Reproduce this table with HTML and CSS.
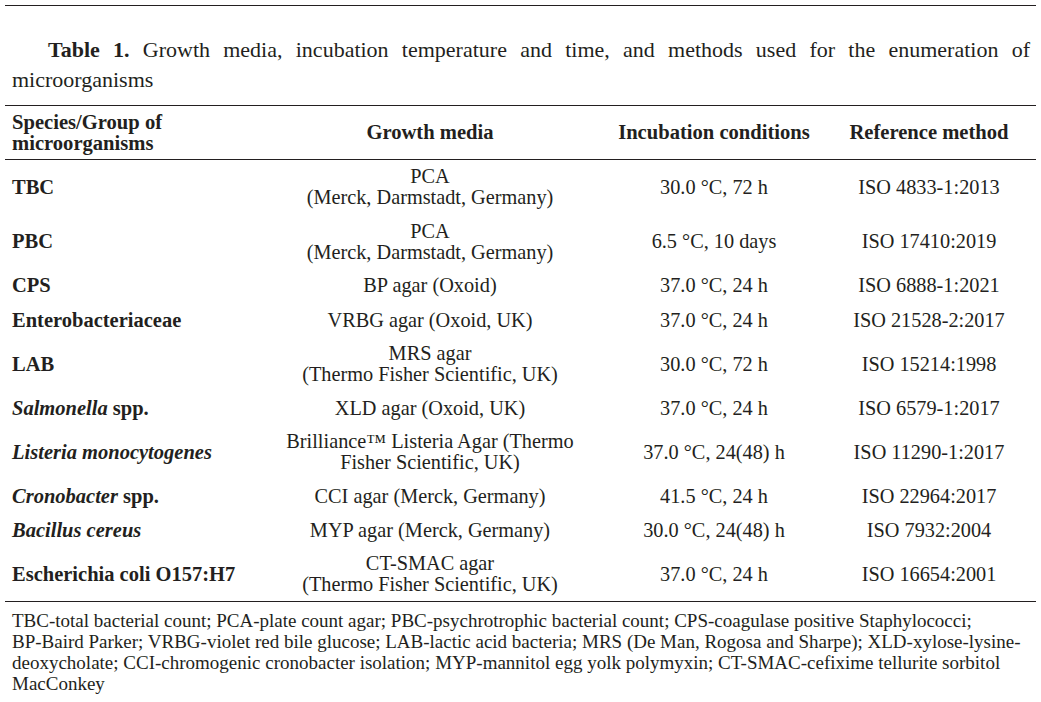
FILE: index.html
```html
<!DOCTYPE html>
<html lang="en">
<head>
<meta charset="utf-8">
<title>Table 1</title>
<link rel="stylesheet" href="styles.css">
</head>
<body>
<div class="page">
  <div class="caption">
    <div class="cap-l1"><b>Table 1.</b> Growth media, incubation temperature and time, and methods used for the enumeration of</div>
    <div class="cap-l2">microorganisms</div>
  </div>
  <table class="data">
    <thead>
      <tr>
        <th class="c1">Species/Group of<br>microorganisms</th>
        <th class="c2">Growth media</th>
        <th class="c3">Incubation conditions</th>
        <th class="c4">Reference method</th>
      </tr>
    </thead>
    <tbody>
      <tr>
        <td class="c1">TBC</td>
        <td class="c2">PCA<br>(Merck, Darmstadt, Germany)</td>
        <td class="c3">30.0 °C, 72 h</td>
        <td class="c4">ISO 4833-1:2013</td>
      </tr>
      <tr>
        <td class="c1">PBC</td>
        <td class="c2">PCA<br>(Merck, Darmstadt, Germany)</td>
        <td class="c3">6.5 °C, 10 days</td>
        <td class="c4">ISO 17410:2019</td>
      </tr>
      <tr>
        <td class="c1">CPS</td>
        <td class="c2">BP agar (Oxoid)</td>
        <td class="c3">37.0 °C, 24 h</td>
        <td class="c4">ISO 6888-1:2021</td>
      </tr>
      <tr class="r-entero">
        <td class="c1">Enterobacteriaceae</td>
        <td class="c2">VRBG agar (Oxoid, UK)</td>
        <td class="c3">37.0 °C, 24 h</td>
        <td class="c4">ISO 21528-2:2017</td>
      </tr>
      <tr>
        <td class="c1">LAB</td>
        <td class="c2">MRS agar<br>(Thermo Fisher Scientific, UK)</td>
        <td class="c3">30.0 °C, 72 h</td>
        <td class="c4">ISO 15214:1998</td>
      </tr>
      <tr>
        <td class="c1"><i>Salmonella</i> spp.</td>
        <td class="c2">XLD agar (Oxoid, UK)</td>
        <td class="c3">37.0 °C, 24 h</td>
        <td class="c4">ISO 6579-1:2017</td>
      </tr>
      <tr>
        <td class="c1"><i>Listeria monocytogenes</i></td>
        <td class="c2">Brilliance™ Listeria Agar (Thermo<br>Fisher Scientific, UK)</td>
        <td class="c3">37.0 °C, 24(48) h</td>
        <td class="c4">ISO 11290-1:2017</td>
      </tr>
      <tr>
        <td class="c1"><i>Cronobacter</i> spp.</td>
        <td class="c2">CCI agar (Merck, Germany)</td>
        <td class="c3">41.5 °C, 24 h</td>
        <td class="c4">ISO 22964:2017</td>
      </tr>
      <tr>
        <td class="c1"><i>Bacillus cereus</i></td>
        <td class="c2">MYP agar (Merck, Germany)</td>
        <td class="c3">30.0 °C, 24(48) h</td>
        <td class="c4">ISO 7932:2004</td>
      </tr>
      <tr>
        <td class="c1">Escherichia coli O157:H7</td>
        <td class="c2">CT-SMAC agar<br>(Thermo Fisher Scientific, UK)</td>
        <td class="c3">37.0 °C, 24 h</td>
        <td class="c4">ISO 16654:2001</td>
      </tr>
    </tbody>
  </table>
  <p class="footnote">TBC-total bacterial count; PCA-plate count agar; PBC-psychrotrophic bacterial count; CPS-coagulase positive Staphylococci;<br>BP-Baird Parker; VRBG-violet red bile glucose; LAB-lactic acid bacteria; MRS (De Man, Rogosa and Sharpe); XLD-xylose-lysine-<br>deoxycholate; CCI-chromogenic cronobacter isolation; MYP-mannitol egg yolk polymyxin; CT-SMAC-cefixime tellurite sorbitol<br>MacConkey</p>
</div>
</body>
</html>
```
FILE: styles.css
```css
html, body {
  margin: 0;
  padding: 0;
  background: #ffffff;
}

.page {
  width: 1031px;
  margin: 5px 0 0 5px;
  border-top: 1px solid #231f20;
  color: #231f20;
  font-family: "Liberation Serif", "Times New Roman", serif;
}

.caption {
  margin: 29px 6px 10px 7px;
  font-size: 22px;
  line-height: 30px;
}

.cap-l1 {
  text-align: justify;
  text-align-last: justify;
  text-indent: 36px;
}

.cap-l2 {
  text-align: left;
}

.data {
  width: 1031px;
  border-collapse: collapse;
  table-layout: fixed;
  font-size: 20.3px;
  line-height: 21px;
}

.data thead tr {
  border-top: 1px solid #231f20;
  border-bottom: 1px solid #231f20;
}

.data tbody tr:last-child {
  border-bottom: 1px solid #231f20;
}

.data th {
  font-weight: bold;
  font-size: 20.6px;
  padding: 5.5px 0;
  vertical-align: middle;
}

.data td {
  padding: 6.3px 0;
  vertical-align: middle;
}

.data .r-entero td {
  padding-top: 7.3px;
  padding-bottom: 5.8px;
}

.data .c1 {
  width: 249px;
  text-align: left;
  padding-left: 7px;
  box-sizing: border-box;
}

.data td.c1 {
  font-weight: bold;
  font-size: 20.5px;
}

.data .c2 {
  width: 352px;
  text-align: center;
}

.data .c3 {
  width: 216px;
  text-align: center;
}

.data .c4 {
  width: 214px;
  text-align: center;
}

.footnote {
  margin: 0;
  padding: 8px 0 0 7px;
  font-size: 19px;
  line-height: 21px;
}
```
